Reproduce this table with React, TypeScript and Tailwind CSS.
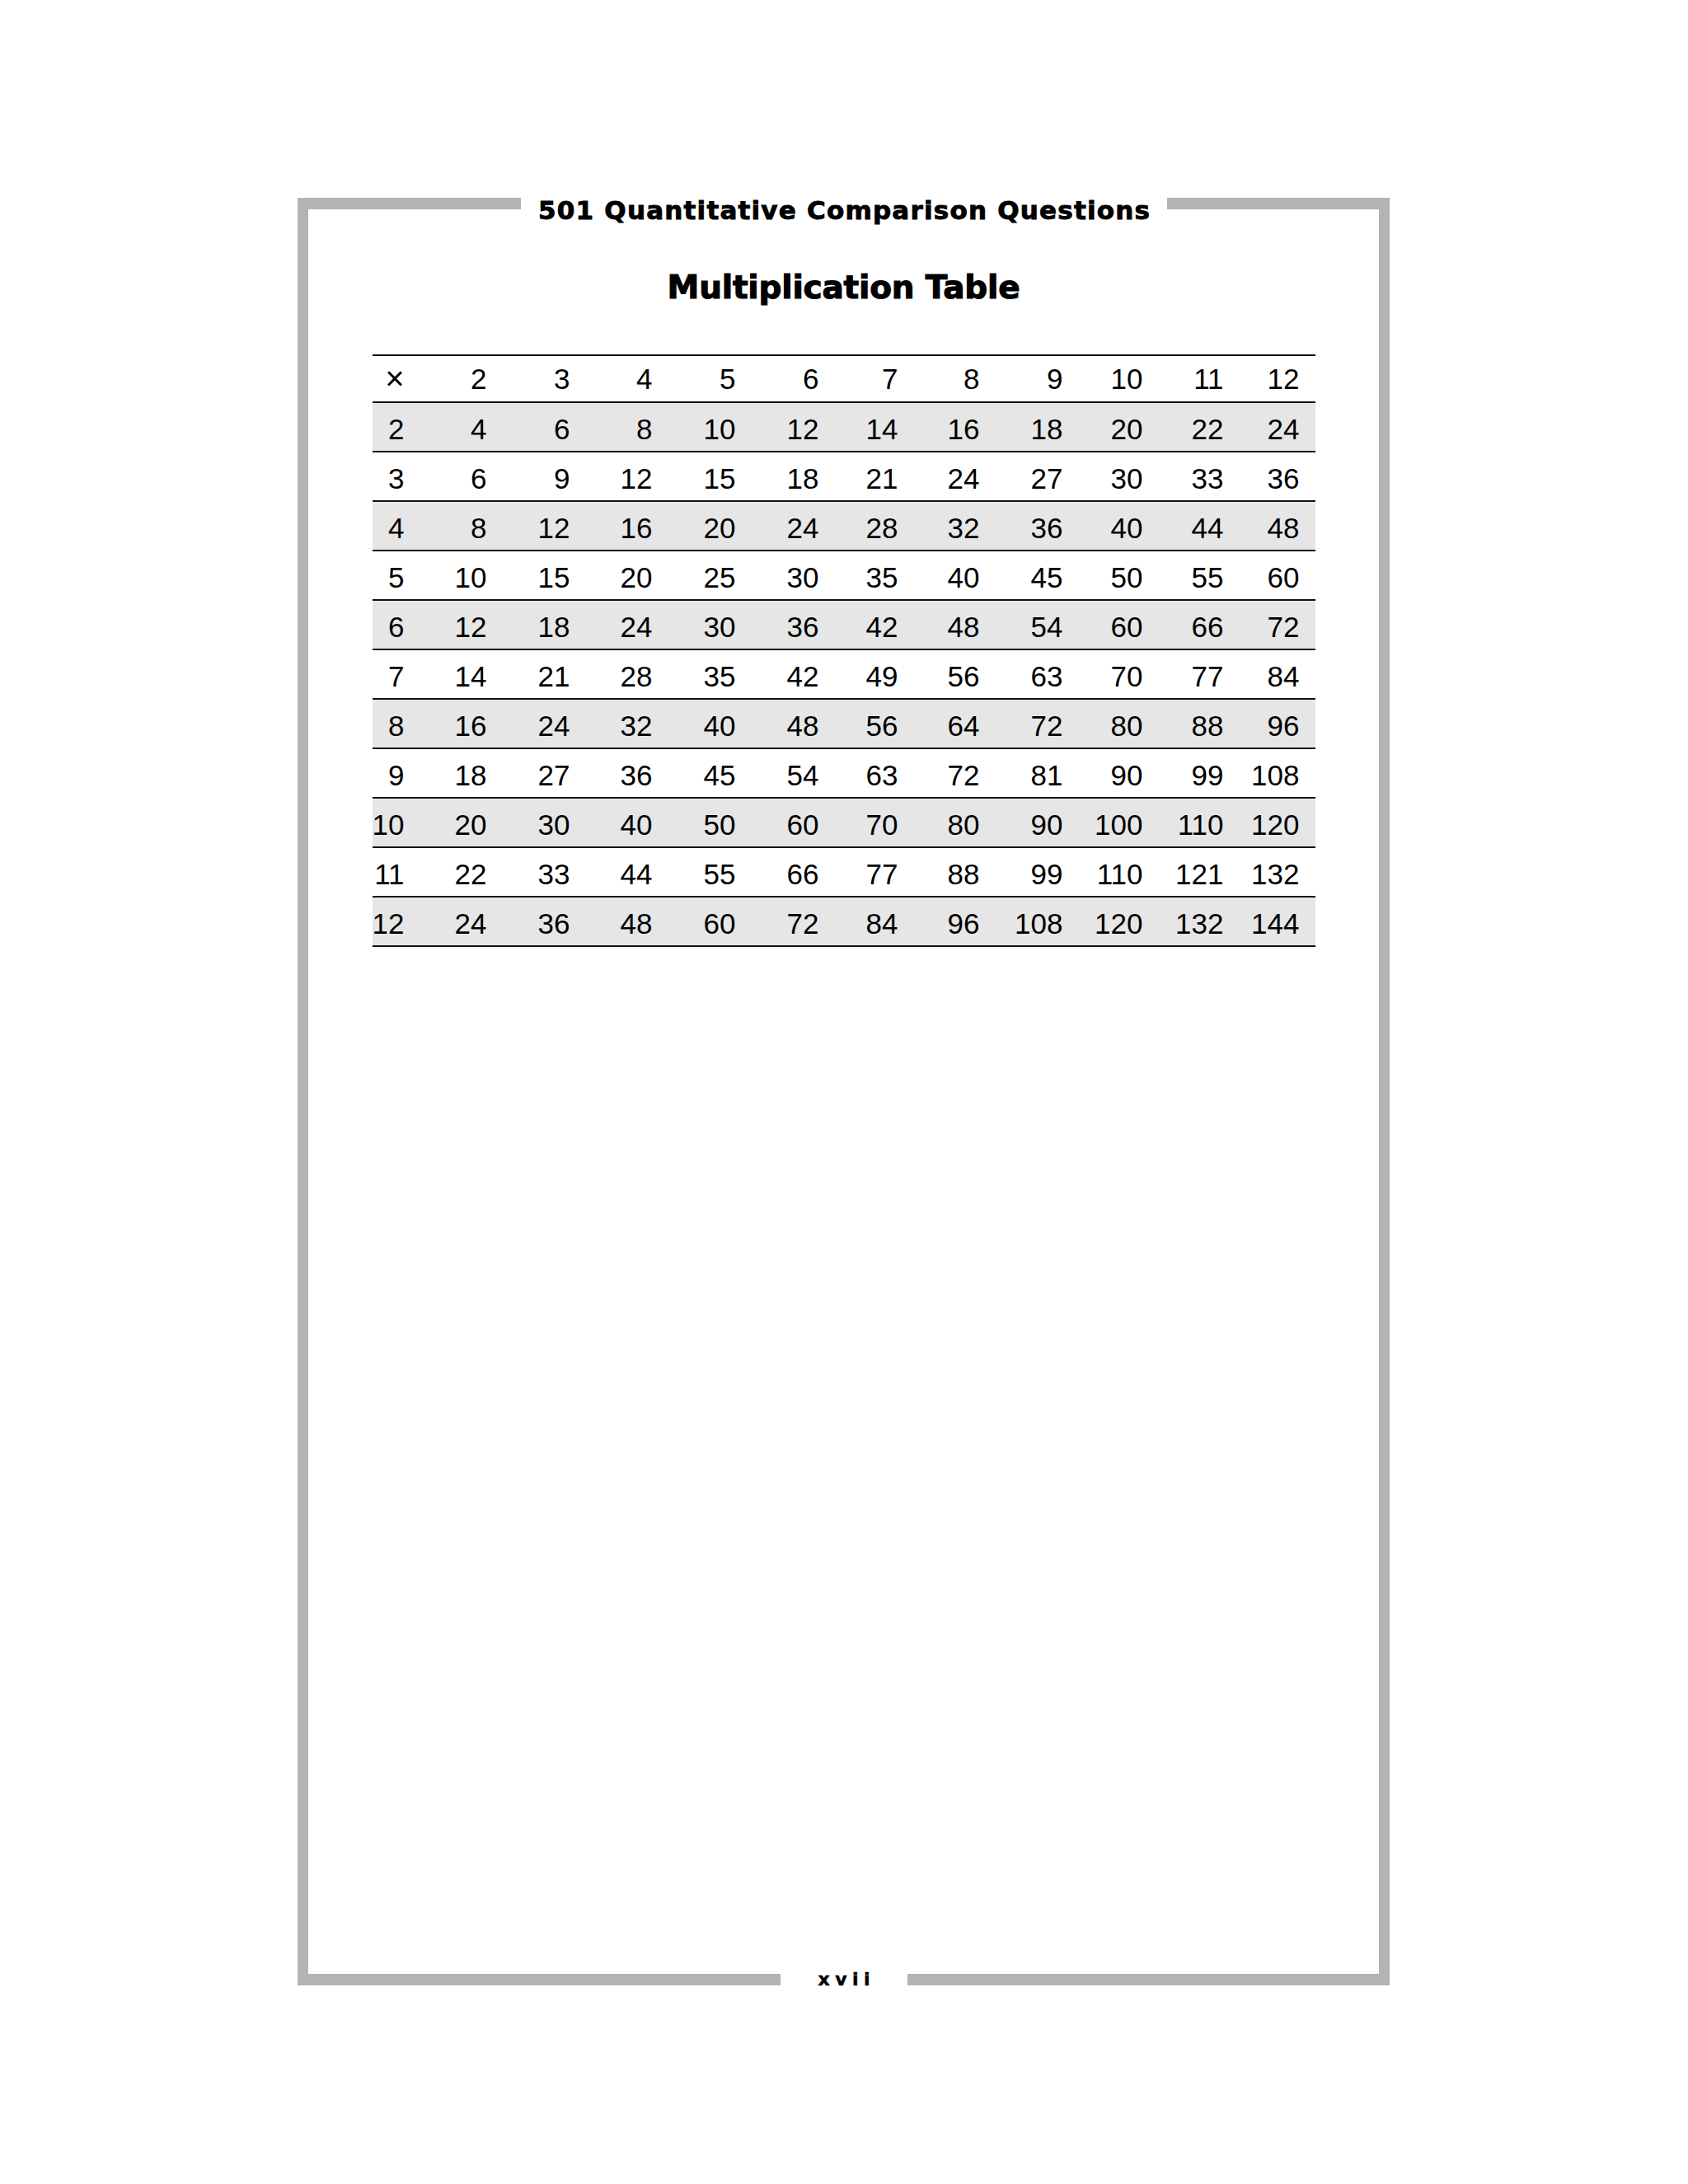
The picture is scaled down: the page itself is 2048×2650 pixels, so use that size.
import React from "react";

const cols = [2, 3, 4, 5, 6, 7, 8, 9, 10, 11, 12];
const rows = [2, 3, 4, 5, 6, 7, 8, 9, 10, 11, 12];

const gridCls =
  "grid grid-cols-[58px_100px_101px_100px_101px_101px_96px_99px_101px_97px_98px_92px]";

export default function App() {
  return (
    <div className="w-[2048px] h-[2650px] bg-white pt-[240px] pl-[361px]">
      <div className="w-[1325px] h-[2169px] flex flex-col border-l-[13px] border-r-[13px] border-[#b3b3b3]">
        {/* top row */}
        <div className="flex items-start">
          <div className="w-[258px] h-[14px] bg-[#b3b3b3]" />
          <div className="w-[784px] text-center text-[31px] leading-none font-bold tracking-[1.2px] pl-[1.2px] text-black [font-family:'DejaVu_Sans',sans-serif] [-webkit-text-stroke:0.9px_#000]">
            501 Quantitative Comparison Questions
          </div>
          <div className="w-[257px] h-[14px] bg-[#b3b3b3]" />
        </div>

        {/* title */}
        <div className="mt-[58px] text-center text-[39px] leading-none font-bold tracking-[-0.2px] text-black [font-family:'DejaVu_Sans',sans-serif] [-webkit-text-stroke:1.1px_#000]">
          Multiplication Table
        </div>

        {/* table */}
        <div className="mt-[62px] mx-auto w-[1144px] border-t-2 border-[#111] text-[35px] text-black [font-family:'Liberation_Sans',Arial,sans-serif]">
          <div className={`${gridCls} h-[57px] border-b-2 border-[#111] bg-white`}>
            <div className="text-right pr-[19px] leading-[55px]">
              <span className="text-[40px] leading-[55px]">×</span>
            </div>
            {cols.map((c) => (
              <div key={c} className="text-right pr-[19px] leading-[55px]">
                {c}
              </div>
            ))}
          </div>
          {rows.map((r, i) => (
            <div
              key={r}
              className={`${gridCls} h-[60px] border-b-2 border-[#111] ${
                i % 2 === 0 ? "bg-[#e6e6e6]" : "bg-white"
              }`}
            >
              <div className="text-right pr-[19px] pt-[5px] leading-[53px]">{r}</div>
              {cols.map((c) => (
                <div key={c} className="text-right pr-[19px] pt-[5px] leading-[53px]">
                  {r * c}
                </div>
              ))}
            </div>
          ))}
        </div>

        <div className="flex-1" />

        {/* bottom row */}
        <div className="flex items-end">
          <div className="w-[573px] h-[14px] bg-[#b3b3b3]" />
          <div className="w-[154px] mb-[-4px] text-center text-[22px] leading-none font-bold tracking-[6.5px] pl-[6.5px] text-black [font-family:'DejaVu_Sans',sans-serif] [-webkit-text-stroke:0.5px_#000]">
            xvii
          </div>
          <div className="w-[572px] h-[14px] bg-[#b3b3b3]" />
        </div>
      </div>
    </div>
  );
}
